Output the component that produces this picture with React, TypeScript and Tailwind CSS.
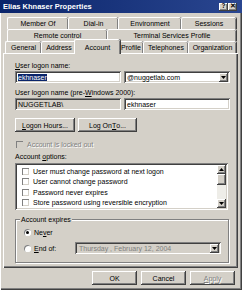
import React from 'react';

const raised =
  'shadow-[inset_-1px_-1px_0_#404040,inset_1px_1px_0_#ffffff,inset_-2px_-2px_0_#808080]';
const sunken =
  'shadow-[inset_1px_1px_0_#808080,inset_-1px_-1px_0_#ffffff,inset_2px_2px_0_#404040,inset_-2px_-2px_0_#d4d0c8]';

function U({ children }: { children: React.ReactNode }) {
  return <span className="underline underline-offset-1">{children}</span>;
}

function Tab({ label, w, selected }: { label: string; w: number; selected?: boolean }) {
  if (selected) {
    return (
      <div
        style={{ width: w + 4 }}
        className="relative z-10 -mx-[2px] -mt-[2px] mb-[-1px] flex h-[15px] items-center justify-center rounded-t-[2px] border-l border-t border-white bg-[#d4d0c8] shadow-[inset_-1px_0_0_#808080,1px_0_0_#404040]"
      >
        {label}
      </div>
    );
  }
  return (
    <div
      style={{ width: w }}
      className="flex h-[12px] items-center justify-center rounded-t-[2px] border-l border-t border-white shadow-[inset_-1px_0_0_#808080,1px_0_0_#404040]"
    >
      {label}
    </div>
  );
}

function Check({ label, disabled }: { label: React.ReactNode; disabled?: boolean }) {
  return (
    <div className="flex h-[11px] items-center gap-[4px]">
      <div className={`h-[7px] w-[7px] ${disabled ? 'bg-[#d4d0c8]' : 'bg-white'} shadow-[inset_1px_1px_0_#808080,inset_-1px_-1px_0_#d4d0c8]`} />
      <span className={disabled ? 'text-[#808080] [text-shadow:1px_1px_0_#ffffff]' : ''}>{label}</span>
    </div>
  );
}

function Radio({ label, checked }: { label: React.ReactNode; checked?: boolean }) {
  return (
    <div className="flex items-center gap-[3px]">
      <div className="flex h-[7px] w-[7px] items-center justify-center rounded-full bg-white shadow-[inset_1px_1px_0_#808080,inset_-1px_-1px_0_#ffffff]">
        {checked && <div className="h-[3px] w-[3px] rounded-full bg-black" />}
      </div>
      <span>{label}</span>
    </div>
  );
}

function DropBtn() {
  return (
    <div className={`flex h-[9px] w-[9px] items-center justify-center bg-[#d4d0c8] ${raised}`}>
      <svg width="5" height="3" viewBox="0 0 5 3">
        <path d="M0 0h5L2.5 3z" fill="#000" />
      </svg>
    </div>
  );
}

function Btn({ children, w, disabled }: { children: React.ReactNode; w: number; disabled?: boolean }) {
  return (
    <div
      style={{ width: w }}
      className={`flex h-[14px] items-center justify-center bg-[#d4d0c8] ${raised} ${disabled ? 'text-[#808080] [text-shadow:1px_1px_0_#ffffff]' : ''}`}
    >
      {children}
    </div>
  );
}

export default function App() {
  const options = [
    'User must change password at next logon',
    'User cannot change password',
    'Password never expires',
    'Store password using reversible encryption',
  ];

  return (
    <div
      className="relative flex h-[290px] w-[242px] flex-col overflow-hidden bg-[#d4d0c8] text-[7px] leading-none text-black shadow-[inset_1px_1px_0_#ffffff,inset_-1px_-1px_0_#404040,inset_-2px_-2px_0_#808080]"
      style={{ fontFamily: '"Liberation Sans", Arial, sans-serif' }}
    >
      {/* Title bar */}
      <div className="flex h-[13px] items-center justify-between bg-linear-to-r from-[#0a246a] to-[#2a4690] pl-[3px] pr-[5px]">
        <span className="text-[7.5px] font-bold text-white">Elias Khnaser Properties</span>
        <div className="flex">
          <div className={`flex h-[8px] w-[9px] items-center justify-center bg-[#d4d0c8] text-[6.5px] font-bold ${raised}`}>?</div>
          <div className={`flex h-[8px] w-[9px] items-center justify-center bg-[#d4d0c8] text-[6.5px] font-bold ${raised}`}>✕</div>
        </div>
      </div>

      {/* Tabs */}
      <div className="mt-[4px] flex flex-col">
        <div className="flex pl-[7px]">
          <Tab label="Member Of" w={61} />
          <Tab label="Dial-in" w={50} />
          <Tab label="Environment" w={63} />
          <Tab label="Sessions" w={55} />
        </div>
        <div className="flex pl-[7px]">
          <Tab label="Remote control" w={100} />
          <Tab label="Terminal Services Profile" w={129} />
        </div>
        <div className="flex pl-[5px]">
          <Tab label="General" w={36} />
          <Tab label="Address" w={35} />
          <Tab label="Account" w={42} selected />
          <Tab label="Profile" w={25} />
          <Tab label="Telephones" w={45} />
          <Tab label="Organization" w={48} />
        </div>
      </div>

      {/* Panel */}
      <div className="ml-[3px] flex h-[215px] w-[235px] flex-col border-l border-t border-white pl-[11px] pr-[8px] pt-[8px] shadow-[inset_-1px_-1px_0_#404040,inset_-2px_-2px_0_#808080]">
        <div className="h-[8px]">
          <U>U</U>ser logon name:
        </div>
        <div className="mt-[1px] flex gap-[3px]">
          <div className={`flex h-[12px] w-[106px] items-center bg-white px-[3px] ${sunken}`}>
            <span className="bg-[#0a246a] text-white">ekhnaser</span>
          </div>
          <div className={`flex h-[12px] w-[106px] items-center justify-between bg-white pl-[3px] pr-[2px] ${sunken}`}>
            <span>@nuggetlab.com</span>
            <DropBtn />
          </div>
        </div>
        <div className="mt-[6px] h-[9px] whitespace-nowrap">
          User logon name (pre-<U>W</U>indows 2000):
        </div>
        <div className="flex gap-[3px]">
          <div className={`flex h-[12px] w-[106px] items-center bg-[#d4d0c8] px-[3px] ${sunken}`}>NUGGETLAB\</div>
          <div className={`flex h-[12px] w-[106px] items-center bg-white px-[3px] ${sunken}`}>ekhnaser</div>
        </div>

        <div className="mt-[8px] flex gap-[3px]">
          <Btn w={60}>
            <U>L</U>ogon Hours...
          </Btn>
          <Btn w={59}>
            Log On <U>T</U>o...
          </Btn>
        </div>

        <div className="mt-[7px] pl-[1px]">
          <Check label="Account is locked out" disabled />
        </div>

        <div className="mt-[3px] h-[8px]">
          Account <U>o</U>ptions:
        </div>

        <div className={`mt-[2px] flex h-[47px] w-[213px] bg-white p-[2px] ${sunken}`}>
          <div className="flex flex-1 flex-col pl-[5px] pt-[1px]">
            {options.map((o) => (
              <Check key={o} label={<span className="whitespace-nowrap">{o}</span>} />
            ))}
          </div>
          <div className="flex w-[9px] flex-col">
            <div className={`flex h-[9px] items-center justify-center bg-[#d4d0c8] ${raised}`}>
              <svg width="5" height="3" viewBox="0 0 5 3">
                <path d="M0 3h5L2.5 0z" fill="#000" />
              </svg>
            </div>
            <div className={`h-[11px] bg-[#d4d0c8] ${raised}`} />
            <div className="flex-1 bg-[#eeede8]" />
            <DropBtn />
          </div>
        </div>

        {/* Account expires */}
        <div className="relative mt-[9px] h-[44px] w-[214px] border border-[#808080] shadow-[1px_1px_0_#ffffff,inset_1px_1px_0_#ffffff]">
          <div className="absolute -top-[4px] left-[4px] bg-[#d4d0c8] px-[1px]">Account expires</div>
          <div className="flex flex-col gap-[6px] pl-[8px] pt-[9px]">
            <Radio checked label={<>Ne<U>v</U>er</>} />
            <div className="flex items-center">
              <div className="w-[51px]">
                <Radio label={<><U>E</U>nd of:</>} />
              </div>
              <div className={`flex h-[12px] w-[146px] items-center justify-between bg-[#d4d0c8] pl-[4px] pr-[2px] text-[#808080] ${sunken}`}>
                <span className="whitespace-nowrap">Thursday ,  February  12, 2004</span>
                <DropBtn />
              </div>
            </div>
          </div>
        </div>
      </div>

      {/* Bottom buttons */}
      <div className="mt-[3px] flex justify-end gap-[4px] pr-[7px]">
        <Btn w={45}>OK</Btn>
        <Btn w={45}>Cancel</Btn>
        <Btn w={45} disabled>
          <U>A</U>pply
        </Btn>
      </div>
    </div>
  );
}
